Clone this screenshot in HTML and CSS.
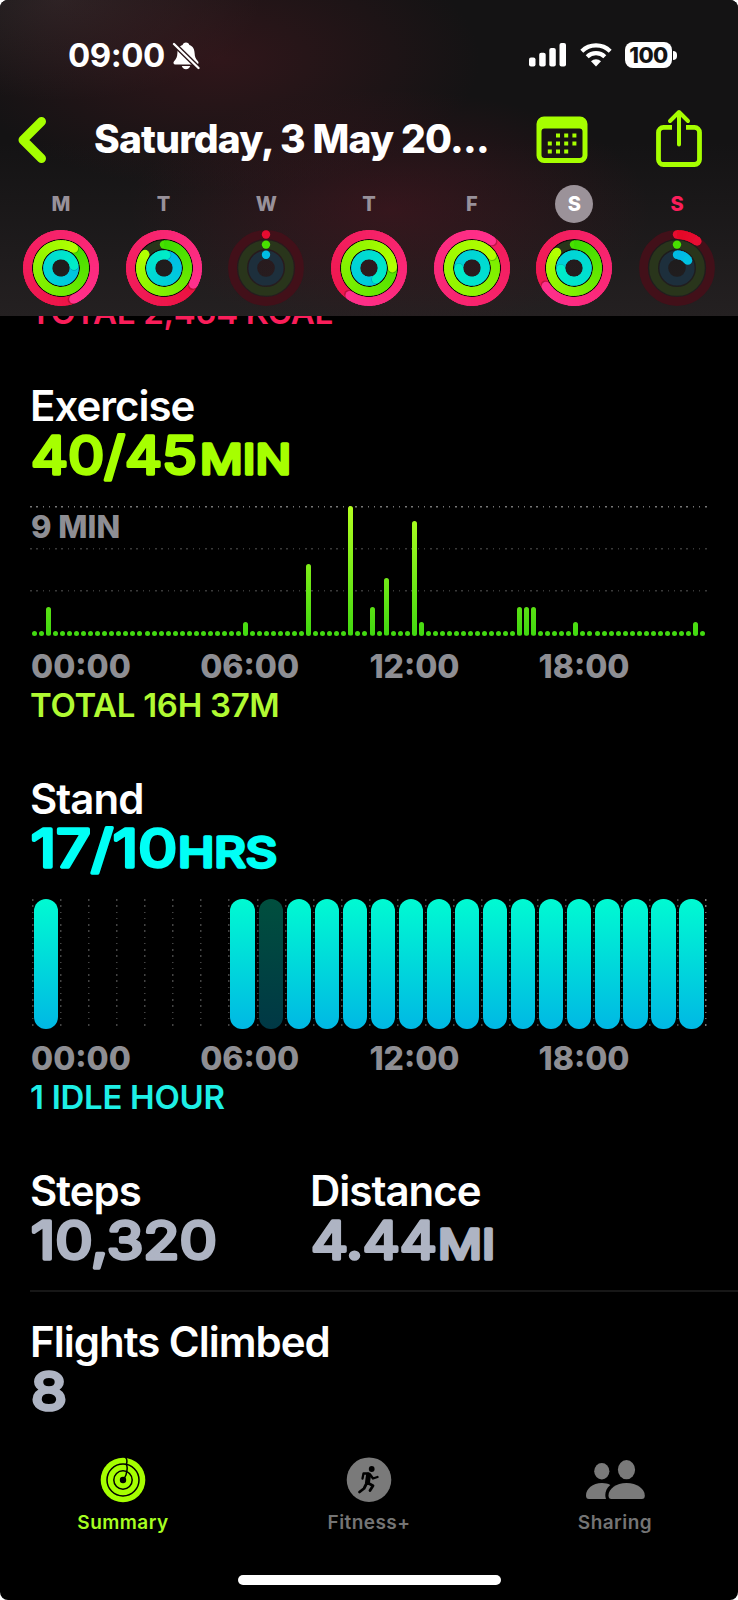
FILE: index.html
```
<!DOCTYPE html>
<html lang="en">
<head>
  <meta charset="UTF-8">
  <meta name="viewport" content="width=device-width, initial-scale=1.0">
  <title>Activity Summary</title>
  <link rel="stylesheet" href="styles.css">
</head>
<body>
  <div class="screen">
    <header>
      <div class="status-bar">
        <div class="status-left">
          <span class="clock">09:00</span>
          <svg class="bell" width="28" height="28" viewBox="0 0 28 28">
            <path fill="#fff" d="M14 .6c1.900 0 3 1 3.400 2.500 3.600 1.200 5 4.200 5.200 8 .2 4.200 1.100 6 3.300 8.200 1.200 1.300.7 3.200-1.200 3.200H3.300c-1.900 0-2.400-1.900-1.200-3.200 2.200-2.200 3.100-4 3.300-8.200.2-3.800 1.600-6.800 5.200-8C11 1.600 12.100.6 14 .6zM9.800 24h8.400c-.5 2-2 3.200-4.200 3.200S10.300 26 9.800 24z"/>
            <path d="M1 1l26 25.500" stroke="#2c181b" stroke-width="5"/>
            <path d="M2 2l24.500 24" stroke="#fff" stroke-width="2.300" stroke-linecap="round"/>
          </svg>
        </div>
        <div class="status-right">
          <svg width="38" height="26" viewBox="0 0 38 26" fill="#fff">
            <rect x="0" y="15.500" width="6.500" height="9" rx="2"/>
            <rect x="10.200" y="10.800" width="6.500" height="13.700" rx="2"/>
            <rect x="20.300" y="6" width="6.500" height="18.500" rx="2"/>
            <rect x="30.500" y="1" width="6.500" height="23.500" rx="2"/>
          </svg>
          <svg class="wifi" width="32" height="26" viewBox="0 0 32 26" fill="none" stroke="#fff" stroke-width="4.200">
            <path d="M1.800 9.200a20.300 20.300 0 0 1 28.400 0"/>
            <path d="M7.200 14.700a12.600 12.600 0 0 1 17.600 0"/>
            <path d="M16 24.500l-5-5.200a7.200 7.200 0 0 1 10 0z" fill="#fff" stroke="none"/>
          </svg>
          <div class="battery">100</div>
          <span class="battery-cap"></span>
        </div>
      </div>

      <div class="nav-bar">
        <svg class="back" width="30" height="48" viewBox="0 0 30 48" fill="none" stroke="#a6ff00" stroke-width="9" stroke-linecap="round" stroke-linejoin="round">
          <path d="M24.500 5.500L6 24l18.500 18.500"/>
        </svg>
        <h1>Saturday, 3 May 20...</h1>
        <svg class="calendar" width="52" height="48" viewBox="0 0 52 48">
          <path fill="#a6ff00" fill-rule="evenodd" d="M8 .5h36a7.500 7.500 0 0 1 7.500 7.500v31.500A7.500 7.500 0 0 1 44 47H8a7.500 7.500 0 0 1-7.500-7.500V8A7.500 7.500 0 0 1 8 .5zM8.500 12.500a3 3 0 0 0-3 3v23.500a3 3 0 0 0 3 3h35a3 3 0 0 0 3-3V15.500a3 3 0 0 0-3-3z"/>
          <path stroke="#a6ff00" stroke-width="4" stroke-dasharray="4 4.200" d="M20 19.500h21M11.800 27.500h29M11.800 35.500h21"/>
        </svg>
        <svg class="share" width="48" height="60" viewBox="0 0 48 60" fill="none" stroke="#a6ff00" stroke-width="4.800" stroke-linejoin="round">
          <path d="M17 19.400H8.500a5 5 0 0 0-5 5v27.100a5 5 0 0 0 5 5h31a5 5 0 0 0 5-5V24.400a5 5 0 0 0-5-5H31"/>
          <path d="M24 36.500V4.500M15 13l9-9 9 9" stroke-width="4" stroke-linecap="round"/>
        </svg>
      </div>

      <div class="week" id="week"></div>
    </header>

    <main>
      <p class="total move">TOTAL 2,464 KCAL</p>

      <!-- Exercise -->
      <section>
        <h2>Exercise</h2>
        <svg class="value exercise" width="400" height="56">
          <text x="1" y="43" textLength="166" lengthAdjust="spacingAndGlyphs">40/45</text>
          <text class="unit" x="170" y="43" textLength="91" lengthAdjust="spacingAndGlyphs">MIN</text>
        </svg>
        <div class="chart exercise-chart" id="exercise-chart">
          <span class="chart-max">9 MIN</span>
        </div>
        <div class="hours"><span>00:00</span><span>06:00</span><span>12:00</span><span>18:00</span></div>
        <p class="total exercise">TOTAL 16H 37M</p>
      </section>

      <!-- Stand -->
      <section>
        <h2>Stand</h2>
        <svg class="value stand" width="400" height="56">
          <text x="1" y="43" textLength="146" lengthAdjust="spacingAndGlyphs">17/10</text>
          <text class="unit" x="148" y="43" textLength="99" lengthAdjust="spacingAndGlyphs">HRS</text>
        </svg>
        <div class="chart stand-chart" id="stand-chart"></div>
        <div class="hours"><span>00:00</span><span>06:00</span><span>12:00</span><span>18:00</span></div>
        <p class="total stand">1 IDLE HOUR</p>
      </section>

      <section class="pair">
        <div>
          <h2>Steps</h2>
          <svg class="value plain" width="260" height="56">
            <text x="1" y="43" textLength="186" lengthAdjust="spacingAndGlyphs">10,320</text>
          </svg>
        </div>
        <div>
          <h2>Distance</h2>
          <svg class="value plain" width="260" height="56">
            <text x="1" y="43" textLength="126" lengthAdjust="spacingAndGlyphs">4.44</text>
            <text class="unit" x="128" y="43" textLength="57" lengthAdjust="spacingAndGlyphs">MI</text>
          </svg>
        </div>
      </section>

      <section class="flights">
        <h2>Flights Climbed</h2>
        <svg class="value plain" width="200" height="56">
          <text x="1" y="43" textLength="36" lengthAdjust="spacingAndGlyphs">8</text>
        </svg>
      </section>
    </main>

    <nav class="tabs">
      <div class="tab active">
        <svg width="46" height="46" viewBox="0 0 46 46">
          <circle cx="23" cy="23" r="22.300" fill="#a6ff00"/>
          <g fill="none" stroke="#000" stroke-width="1.500">
            <circle cx="23" cy="23" r="16"/>
            <circle cx="23" cy="23" r="9.200"/>
            <path d="M25.500.5c1.800 1.500 1.800 3.500 1 6.500M26 7c1.500 2 1.500 4 .8 7M26.500 14c.5 3-.5 5-2.500 8"/>
          </g>
          <circle cx="23" cy="23" r="3.200" fill="#000"/>
        </svg>
        <span>Summary</span>
      </div>
      <div class="tab">
        <svg width="46" height="46" viewBox="0 0 46 46">
          <circle cx="23" cy="22.700" r="22.300" fill="#7a7a7a"/>
          <circle cx="25.700" cy="12" r="2.900" fill="#000"/>
          <g fill="none" stroke="#000" stroke-linecap="round" stroke-linejoin="round">
            <path d="M22.500 18l-1 7.500" stroke-width="5"/>
            <path d="M22 16.500h-4.500l-1 5M24.500 18l2.500 3.500 4.500-1.500" stroke-width="2.300"/>
            <path d="M22 26l5 2.800-3 4.700M20 27.500l-2 4-4.500 3.500" stroke-width="2.800"/>
          </g>
        </svg>
        <span>Fitness+</span>
      </div>
      <div class="tab">
        <svg width="60" height="46" viewBox="0 0 60 46" fill="#7a7a7a">
          <ellipse cx="16.800" cy="14.300" rx="7.600" ry="8.200"/>
          <path d="M1 38.500C1 32 7.500 26 17 26c3.300 0 6 .7 8.300 1.900-3.500 2.800-5 6.500-5 10.100 0 1.500.2 2.800.7 4H4c-2 0-3-1-3-3.500z"/>
          <ellipse cx="41.500" cy="12.700" rx="8.600" ry="9.600"/>
          <path d="M23.500 38.500C23.500 32 31 26 41.500 26S59.800 32 59.800 38.500c0 2.500-1 3.500-3 3.500H26.500c-2 0-3-1-3-3.500z"/>
        </svg>
        <span>Sharing</span>
      </div>
    </nav>
    <div class="home-indicator"></div>
  </div>

  <script>
    // degrees swept by each ring; over 360 means the goal was passed
    const week = [
      { day: "M", rings: [518, 393, 440] },
      { day: "T", rings: [479, 306, 370] },
      { day: "W", rings: [0, 0, 0] },
      { day: "T", rings: [575, 450, 507] },
      { day: "F", rings: [756, 778, 630] },
      { day: "S", rings: [597, 313, 626], selected: true },
      { day: "S", rings: [37, 0, 55], today: true }
    ];

    const ringStyles = [
      { r: 33.5, from: [228, 8, 38], to: [255, 48, 140], track: "#421019" },
      { r: 23.4, from: [60, 220, 0], to: [178, 255, 0], track: "#29351b" },
      { r: 13.2, from: [0, 184, 232], to: [0, 236, 200], track: "#1d2f3c" }
    ];

    function point(r, deg) {
      const a = (deg - 90) * Math.PI / 180;
      return [(38 + r * Math.cos(a)).toFixed(2), (38 + r * Math.sin(a)).toFixed(2)];
    }

    function mix(a, b, t) {
      return `rgb(${a.map((v, i) => Math.round(v + (b[i] - v) * t)).join(",")})`;
    }

    function drawRings(values) {
      const dim = values[0] < 90;
      let svg = `<svg class="rings" width="76" height="76" viewBox="0 0 76 76" fill="none">`;
      if (!dim) svg += `<circle cx="38" cy="38" r="23" stroke="#120a0b" stroke-width="28"/>`;
      ringStyles.forEach((ring, i) => {
        const end = values[i];
        const start = Math.max(0, end - 360);
        svg += `<circle cx="38" cy="38" r="${ring.r}" stroke="${ring.track}" stroke-width="8.800"/>`;
        const [sx, sy] = point(ring.r, start);
        if (start === 0) svg += `<circle cx="${sx}" cy="${sy}" r="4.200" fill="${mix(ring.from, ring.to, 0.1)}"/>`;
        for (let d = start; d < end; d += 5) {
          const [x1, y1] = point(ring.r, d);
          const [x2, y2] = point(ring.r, Math.min(d + 12, end));
          svg += `<path d="M${x1} ${y1}A${ring.r} ${ring.r} 0 0 1 ${x2} ${y2}" stroke="${mix(ring.from, ring.to, d / Math.max(end, 300))}" stroke-width="8.800"/>`;
        }
        if (end > 0) {
          const [hx, hy] = point(ring.r, end + 3);
          const [ex, ey] = point(ring.r, end);
          if (end > 360) svg += `<circle cx="${hx}" cy="${hy}" r="4.300" fill="#000" fill-opacity=".2"/>`;
          svg += `<circle cx="${ex}" cy="${ey}" r="4.400" fill="${mix(ring.from, ring.to, end / Math.max(end, 300))}"/>`;
        }
      });
      return svg + "</svg>";
    }

    document.getElementById("week").innerHTML = week.map(d =>
      `<div class="day"><span class="day-name${d.selected ? " selected" : ""}${d.today ? " today" : ""}">${d.day}</span>${drawRings(d.rings)}</div>`
    ).join("");

    // exercise minutes per quarter hour
    const minutes = { 2: 2, 30: 1, 39: 5, 45: 9, 48: 2, 50: 4, 54: 8, 55: 1, 69: 2, 70: 2, 71: 2, 77: 1, 94: 1 };
    const exerciseChart = document.getElementById("exercise-chart");
    for (let i = 0; i < 96; i++) {
      const bar = document.createElement("span");
      bar.className = "minute-bar";
      if (minutes[i]) bar.style.height = minutes[i] * 14.4 + "px";
      exerciseChart.appendChild(bar);
    }

    const standChart = document.getElementById("stand-chart");
    for (let h = 0; h < 24; h++) {
      const slot = document.createElement("div");
      slot.className = "hour-slot";
      if (h === 0 || h > 6) slot.innerHTML = `<span class="hour-bar${h === 8 ? " idle" : ""}"></span>`;
      standChart.appendChild(slot);
    }
  </script>
</body>
</html>
```
FILE: styles.css
```
* {
  box-sizing: border-box;
}
body {
  margin: 0;
  background: #fff;
  font-family: Inter, "Liberation Sans", sans-serif;
  color: #fff;
}
h1, h2, p {
  margin: 0;
}
svg {
  display: block;
  flex-shrink: 0;
}
.screen {
  height: 1600px;
  background: #000;
  border-radius: 8px;
  overflow: hidden;
  display: flex;
  flex-direction: column;
}

/* Header */
header {
  position: relative;
  z-index: 1;
  height: 316px;
  flex-shrink: 0;
  background:
    radial-gradient(ellipse 260px 120px at 390px 210px, rgba(80, 20, 32, 0.5), transparent),
    radial-gradient(ellipse 260px 130px at 220px 60px, rgba(75, 25, 32, 0.5), transparent),
    radial-gradient(ellipse 200px 100px at 60px 0, rgba(75, 60, 62, 0.4), transparent),
    linear-gradient(#141314 45%, #242021);
}
.status-bar {
  height: 109px;
  display: flex;
  justify-content: space-between;
  align-items: center;
  padding: 0 61px 0 68px;
}
.status-left, .status-right {
  display: flex;
  align-items: center;
}
.clock {
  font-size: 33px;
  font-weight: 700;
  letter-spacing: -0.5px;
}
.bell {
  margin-left: 7px;
  margin-top: 2px;
}
.status-right {
  padding-top: 1px;
}
.wifi {
  margin: 0 13px;
}
.battery {
  width: 47px;
  height: 26px;
  border-radius: 8px;
  background: #fff;
  color: #141414;
  font-size: 22px;
  font-weight: 800;
  line-height: 26px;
  text-align: center;
  letter-spacing: -0.5px;
}
.battery-cap {
  width: 4px;
  height: 9px;
  margin-left: 1px;
  border-radius: 0 4px 4px 0;
  background: #fff;
}
.nav-bar {
  height: 61px;
  display: flex;
  align-items: center;
  padding: 0 35px 0 17px;
}
h1 {
  width: 410px;
  margin-left: 47px;
  margin-top: -2px;
  font-size: 39px;
  font-weight: 800;
  line-height: 46px;
  white-space: nowrap;
  letter-spacing: -0.8px;
}
.calendar {
  margin-left: 32px;
}
.share {
  margin-left: auto;
  margin-top: -4px;
}
.week {
  display: flex;
  padding: 15px 9.5px 0;
}
.day {
  flex: 1;
  display: flex;
  flex-direction: column;
  align-items: center;
  gap: 7px;
}
.day-name {
  width: 38px;
  height: 38px;
  border-radius: 50%;
  font-size: 20px;
  font-weight: 800;
  line-height: 38px;
  text-align: center;
  color: #98919a;
}
.day-name.selected {
  background: #9b9299;
  color: #fff;
}
.day-name.today {
  color: #fa1e5a;
}

/* Content */
main {
  padding-left: 30px;
  margin-top: -24px;
}
h2 {
  font-size: 42px;
  font-weight: 600;
  line-height: 50px;
  letter-spacing: -1px;
}
.total {
  font-size: 33px;
  font-weight: 600;
  line-height: 40px;
  letter-spacing: -0.3px;
}
.move {
  color: #fa1e5a;
}
.total.exercise {
  color: #b0fa32;
}
.total.stand {
  color: #1eefe6;
}
section {
  margin-top: 49px;
}
.value {
  overflow: visible;
  font-size: 52px;
  font-weight: 400;
  stroke-width: 3.500px;
  stroke-linejoin: round;
}
.value .unit {
  font-size: 41px;
}
.value.exercise {
  fill: #a6ff00;
  stroke: #a6ff00;
}
.value.stand {
  fill: #00fff6;
  stroke: #00fff6;
}
.value.plain {
  fill: #aeb4c3;
  stroke: #aeb4c3;
}
.chart {
  height: 130px;
  margin-top: 19px;
  display: flex;
}
.exercise-chart {
  position: relative;
  width: 678px;
  align-items: flex-end;
  gap: 2.045px;
  padding-left: 2px;
  background:
    repeating-linear-gradient(90deg, #777 0 1.500px, transparent 1.500px 6.250px) 0 0 / 100% 1.500px no-repeat,
    repeating-linear-gradient(90deg, #3a3a3a 0 1.500px, transparent 1.500px 6.250px) 0 42px / 100% 1.500px no-repeat,
    repeating-linear-gradient(90deg, #3a3a3a 0 1.500px, transparent 1.500px 6.250px) 0 84px / 100% 1.500px no-repeat;
}
.chart-max {
  position: absolute;
  left: 1px;
  top: 3px;
  font-size: 31px;
  font-weight: 800;
  line-height: 36px;
  color: #8e8e93;
}
.minute-bar {
  width: 5px;
  height: 5px;
  flex-shrink: 0;
  border-radius: 2.500px;
  background: linear-gradient(#b4ff20, #40d810) bottom / 100% 130px no-repeat;
}
.stand-chart {
  width: 676px;
  padding-left: 2px;
}
.hour-slot {
  width: 28.070px;
  flex-shrink: 0;
  padding-left: 2px;
  background: repeating-linear-gradient(#444 0 1.500px, transparent 1.500px 6.250px) 0 0 / 1.500px 100% no-repeat;
}
.hour-slot:last-child {
  width: 30px;
  background:
    repeating-linear-gradient(#444 0 1.500px, transparent 1.500px 6.250px) 0 0 / 1.500px 100% no-repeat,
    repeating-linear-gradient(#777 0 1.500px, transparent 1.500px 6.250px) 28px 0 / 1.500px 100% no-repeat;
}
.hour-bar {
  display: block;
  width: 24.300px;
  height: 130px;
  border-radius: 12px;
  background: linear-gradient(#00fad2, #00b8e4);
}
.hour-bar.idle {
  background: linear-gradient(#004f3e, #003845);
}
.hours {
  display: flex;
  margin-top: 12.500px;
  padding-left: 1px;
  font-size: 32px;
  font-weight: 800;
  line-height: 36px;
  color: #8e8e93;
}
.hours span {
  width: 169.200px;
}
.pair {
  display: flex;
  height: 125.500px;
  border-bottom: 2px solid #171717;
}
.pair > div {
  width: 280px;
}
.flights {
  margin-top: 25px;
}

/* Tab bar */
.tabs {
  display: flex;
  margin-top: auto;
  height: 118px;
}
.tab {
  flex: 1;
  display: flex;
  flex-direction: column;
  align-items: center;
  font-size: 19px;
  font-weight: 600;
  letter-spacing: 0.450px;
  line-height: 24px;
  color: #747474;
}
.tab span {
  margin-top: 8px;
}
.tab.active {
  color: #a6ff20;
}
.home-indicator {
  width: 263px;
  height: 10px;
  flex-shrink: 0;
  margin: 0 auto 15px;
  border-radius: 5px;
  background: #fff;
}
```
